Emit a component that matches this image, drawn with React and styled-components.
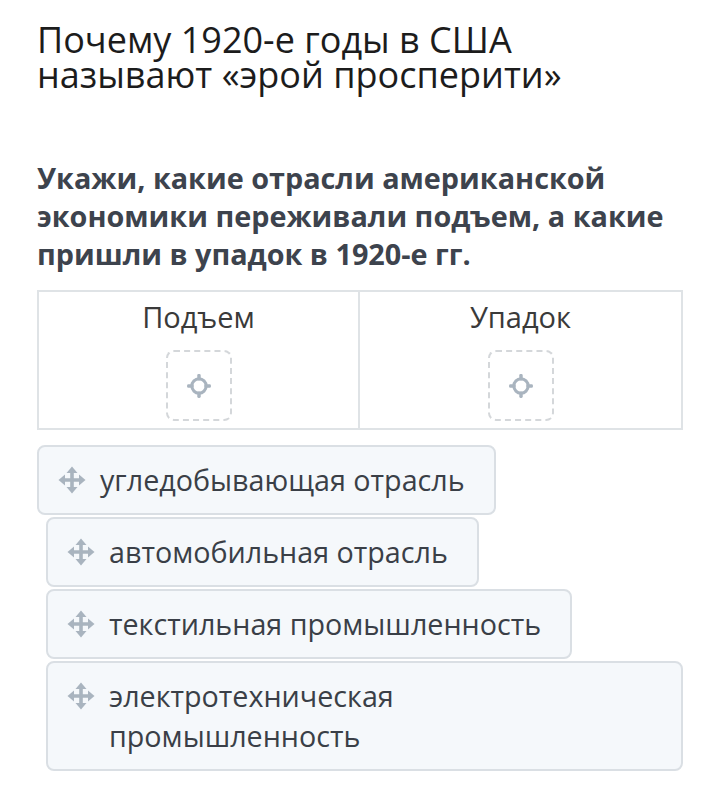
import React from 'react'
import styled, { createGlobalStyle } from 'styled-components'

const GlobalStyle = createGlobalStyle`
  html, body {
    margin: 0;
    padding: 0;
    background: #ffffff;
  }
  body {
    font-family: "Open Sans", "Noto Sans", sans-serif;
  }
`

const categories = ['Подъем', 'Упадок']

const items = [
  { text: 'угледобывающая отрасль', lifted: true },
  { text: 'автомобильная отрасль' },
  { text: 'текстильная промышленность' },
  { text: 'электротехническая промышленность', wide: true },
]

function MoveIcon() {
  return (
    <svg width="28" height="28" viewBox="0 0 28 28" fill="#a9b4bf">
      <rect x="5" y="12.2" width="18" height="3.6" rx="1" />
      <rect x="12.2" y="5" width="3.6" height="18" rx="1" />
      <polygon points="14,0.5 19.5,7 8.5,7" />
      <polygon points="14,27.5 19.5,21 8.5,21" />
      <polygon points="0.5,14 7,8.5 7,19.5" />
      <polygon points="27.5,14 21,8.5 21,19.5" />
    </svg>
  )
}

function TargetIcon() {
  return (
    <svg width="26" height="26" viewBox="0 0 24 24" fill="#a9b4bf">
      <circle cx="12" cy="12" r="6.6" fill="none" stroke="#a9b4bf" strokeWidth="2.8" />
      <rect x="10.4" y="1" width="3.2" height="6" rx="1.2" />
      <rect x="10.4" y="17" width="3.2" height="6" rx="1.2" />
      <rect x="1" y="10.4" width="6" height="3.2" rx="1.2" />
      <rect x="17" y="10.4" width="6" height="3.2" rx="1.2" />
    </svg>
  )
}

function App() {
  return (
    <Page>
      <GlobalStyle />
      <Title>Почему 1920-е годы в США называют «эрой просперити»</Title>
      <Question>
        Укажи, какие отрасли американской экономики переживали подъем, а какие
        пришли в упадок в 1920-е гг.
      </Question>
      <Table>
        {categories.map((name) => (
          <Column key={name}>
            <ColumnTitle>{name}</ColumnTitle>
            <DropZone>
              <TargetIcon />
            </DropZone>
          </Column>
        ))}
      </Table>
      <Items>
        {items.map((item) => (
          <Item key={item.text} $lifted={item.lifted} $wide={item.wide}>
            <Handle>
              <MoveIcon />
            </Handle>
            <ItemText>{item.text}</ItemText>
          </Item>
        ))}
      </Items>
    </Page>
  )
}

const Page = styled.div`
  width: 720px;
  box-sizing: border-box;
  padding: 22px 37px 20px 37px;
`

const Title = styled.h1`
  margin: 0;
  width: 600px;
  font-size: 36px;
  font-weight: 400;
  line-height: 35px;
  color: #1c1c1c;
`

const Question = styled.h2`
  margin: 67px 0 0 0;
  width: 646px;
  font-size: 28.8px;
  font-weight: 700;
  line-height: 38px;
  color: #3d434d;
`

const Table = styled.div`
  margin-top: 17px;
  display: grid;
  grid-template-columns: 319px 1fr;
  border: 2px solid #dfe3e6;
  height: 140px;
  box-sizing: border-box;
`

const Column = styled.div`
  display: flex;
  flex-direction: column;
  align-items: center;
  & + & {
    border-left: 2px solid #dfe3e6;
  }
`

const ColumnTitle = styled.div`
  margin-top: 6px;
  font-size: 29px;
  line-height: 38px;
  color: #3a3a3a;
`

const DropZone = styled.div`
  margin-top: 14px;
  width: 66px;
  height: 71px;
  box-sizing: border-box;
  border: 2px dashed #d4d7da;
  border-radius: 8px;
  display: flex;
  align-items: center;
  justify-content: center;
`

const Items = styled.div`
  margin-top: 15px;
  display: flex;
  flex-direction: column;
  align-items: flex-start;
  gap: 2px;
`

const Item = styled.div`
  display: flex;
  align-items: flex-start;
  gap: 14px;
  box-sizing: border-box;
  min-height: 70px;
  width: ${({ $wide }) => ($wide ? '637px' : 'max-content')};
  margin-left: ${({ $lifted }) => ($lifted ? '0' : '9px')};
  padding: 13px 29px 13px 19px;
  background: #f5f8fb;
  border: 2px solid #dadfe4;
  border-radius: 8px;
`

const Handle = styled.div`
  flex-shrink: 0;
  height: 40px;
  display: flex;
  align-items: center;
`

const ItemText = styled.div`
  max-width: 520px;
  font-size: 28.7px;
  line-height: 40px;
  color: #3a3f47;
`

export default App
